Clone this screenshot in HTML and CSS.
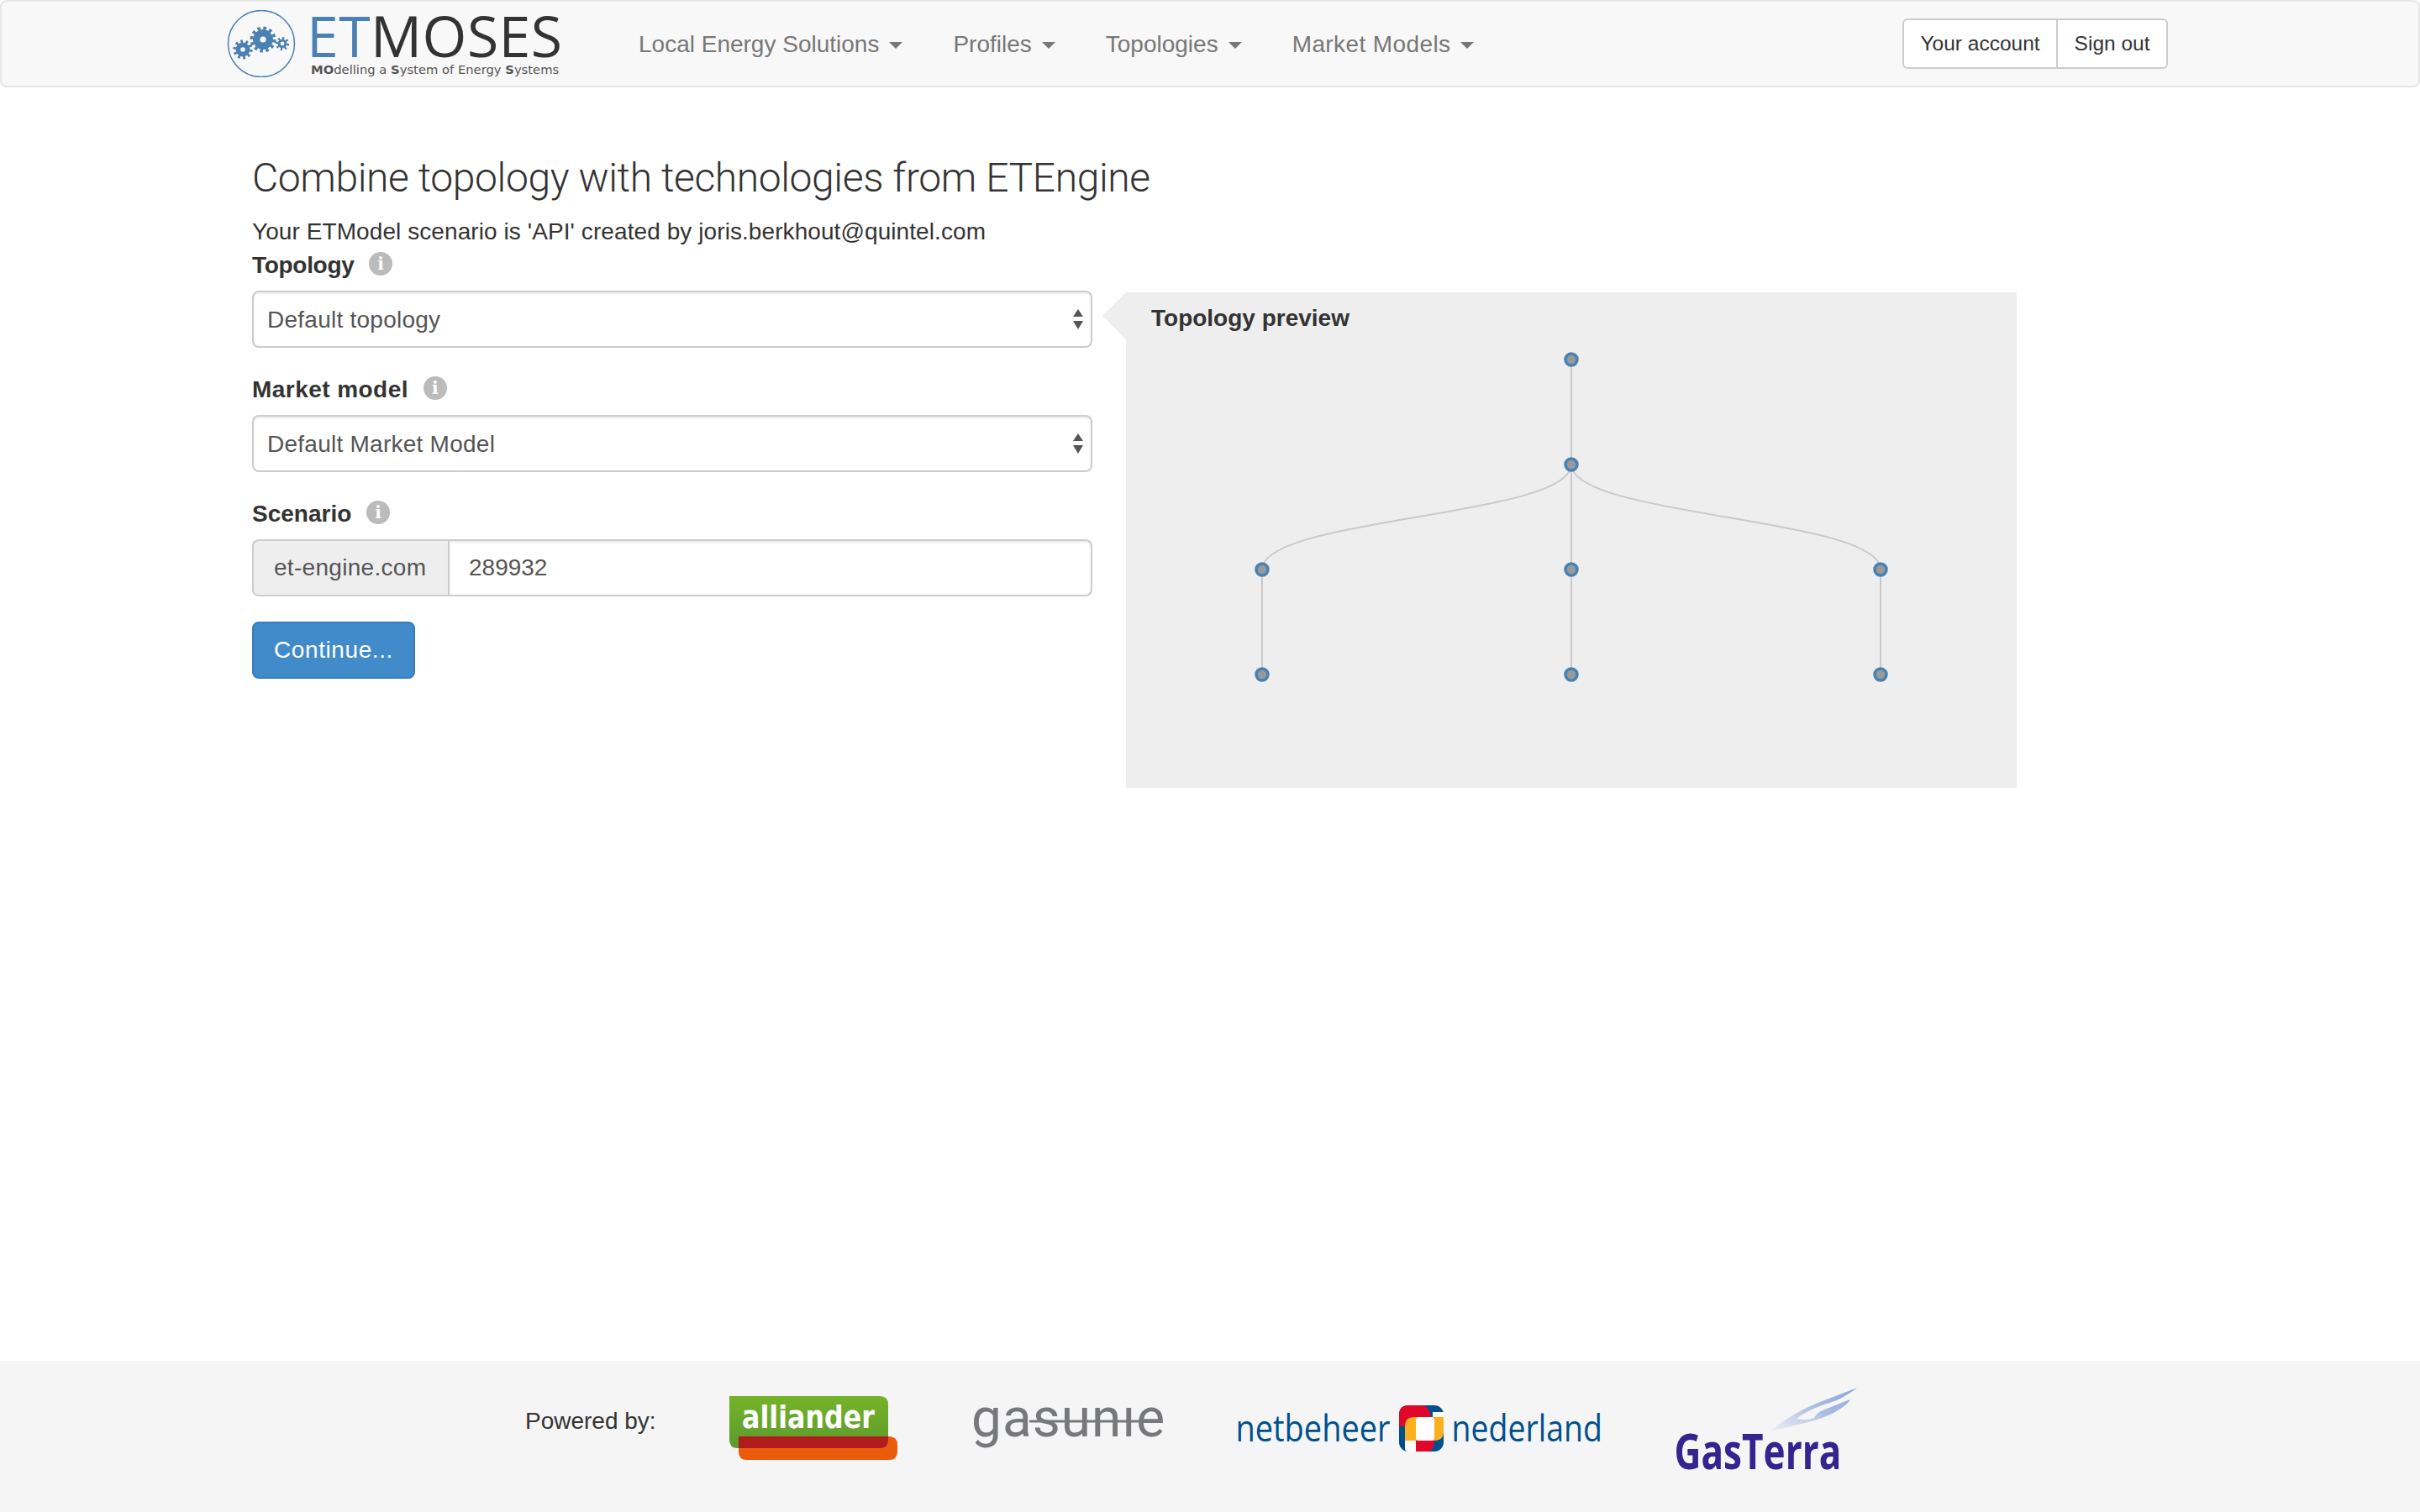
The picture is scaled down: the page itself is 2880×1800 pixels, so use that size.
FILE: index.html
```html
<!DOCTYPE html>
<html lang="en">
<head>
    <meta charset="UTF-8">
    <meta name="viewport" content="width=device-width, initial-scale=1.0">
    <title>ETMoses</title>
    <link rel="stylesheet" href="styles.css">
</head>
<body>
    <nav class="navbar">
        <div class="navbar-inner">
            <a class="brand" href="#">
                <svg class="brand-mark" width="82" height="80" viewBox="0 0 82 80">
                    <circle cx="41" cy="40" r="39.5" fill="none" stroke="#4a80b3" stroke-width="1.5"/>
                    <g fill="#4a80b3" stroke="#4a80b3">
                        <circle cx="43" cy="35" r="11.5"/>
                        <circle cx="43" cy="35" r="13.5" fill="none" stroke-width="4" stroke-dasharray="3.5 3.57"/>
                        <circle cx="19" cy="47" r="8"/>
                        <circle cx="19" cy="47" r="9.8" fill="none" stroke-width="3.6" stroke-dasharray="2.8 3.36"/>
                        <circle cx="66" cy="40" r="5"/>
                        <circle cx="66" cy="40" r="6.6" fill="none" stroke-width="3" stroke-dasharray="2.2 2.95"/>
                    </g>
                    <circle cx="43" cy="35" r="3.6" fill="#f8f8f8"/>
                    <circle cx="19" cy="47" r="2.8" fill="#f8f8f8"/>
                    <circle cx="66" cy="40" r="2.4" fill="#f8f8f8"/>
                </svg>
                <span class="brand-text">
                    <span class="brand-name"><span class="brand-et">ET</span>MOSES</span>
                    <span class="brand-sub"><b>MO</b>delling a <b>S</b>ystem of Energy <b>S</b>ystems</span>
                </span>
            </a>
            <ul class="nav">
                <li><a href="#">Local Energy Solutions<span class="caret"></span></a></li>
                <li><a href="#">Profiles<span class="caret"></span></a></li>
                <li><a href="#">Topologies<span class="caret"></span></a></li>
                <li><a class="nav-wide" href="#">Market Models<span class="caret"></span></a></li>
            </ul>
            <div class="btn-group">
                <a class="btn-sm" href="#">Your account</a>
                <a class="btn-sm" href="#">Sign out</a>
            </div>
        </div>
    </nav>

    <main class="container">
        <h3 class="page-title">Combine topology with technologies from ETEngine</h3>
        <p class="intro">Your ETModel scenario is 'API' created by joris.berkhout@quintel.com</p>
        <div class="row">
            <form class="combine-form">
                <div class="form-group">
                    <label class="label-topology" for="topology">Topology <span class="info">i</span></label>
                    <div class="select-wrap">
                        <select id="topology" class="form-control">
                            <option>Default topology</option>
                        </select>
                        <span class="select-arrows"></span>
                    </div>
                </div>
                <div class="form-group">
                    <label class="label-market" for="market">Market model <span class="info">i</span></label>
                    <div class="select-wrap">
                        <select id="market" class="form-control">
                            <option>Default Market Model</option>
                        </select>
                        <span class="select-arrows"></span>
                    </div>
                </div>
                <div class="form-group">
                    <label for="scenario">Scenario <span class="info">i</span></label>
                    <div class="input-group">
                        <span class="input-addon">et-engine.com</span>
                        <input id="scenario" class="form-control" type="text" value="289932">
                    </div>
                </div>
                <button class="btn-primary" type="button">Continue...</button>
            </form>

            <section class="preview">
                <h5 class="preview-title">Topology preview</h5>
                <svg class="tree" width="1060" height="590" viewBox="0 0 1060 590">
                    <g fill="none" stroke="#c9c9c9" stroke-width="2">
                        <path d="M530 80V205"/>
                        <path d="M530 205C530 267.5 162 267.5 162 330"/>
                        <path d="M530 205V330"/>
                        <path d="M530 205C530 267.5 898 267.5 898 330"/>
                        <path d="M162 330V455"/>
                        <path d="M530 330V455"/>
                        <path d="M898 330V455"/>
                    </g>
                    <g fill="#999" stroke="#4682b4" stroke-width="3.5">
                        <circle cx="530" cy="80" r="7"/>
                        <circle cx="530" cy="205" r="7"/>
                        <circle cx="162" cy="330" r="7"/>
                        <circle cx="530" cy="330" r="7"/>
                        <circle cx="898" cy="330" r="7"/>
                        <circle cx="162" cy="455" r="7"/>
                        <circle cx="530" cy="455" r="7"/>
                        <circle cx="898" cy="455" r="7"/>
                    </g>
                </svg>
            </section>
        </div>
    </main>

    <footer class="footer">
        <span class="powered">Powered by:</span>

        <svg class="logo logo-alliander" width="200" height="76" viewBox="0 0 200 76">
            <defs>
                <linearGradient id="allianderGreen" x1="0" y1="0" x2="0" y2="1">
                    <stop offset="0" stop-color="#76b32a"/>
                    <stop offset="1" stop-color="#5b9a2c"/>
                </linearGradient>
            </defs>
            <path d="M0 0H179Q189 0 189 10V52Q189 62 179 62H10Q0 62 0 52Z" fill="url(#allianderGreen)"/>
            <path d="M11 48H190Q200 48 200 58V66Q200 76 190 76H21Q11 76 11 66Z" fill="#ea5b0c"/>
            <path d="M11 48H189V52Q189 62 179 62H11Z" fill="#b01c1c"/>
            <text class="alliander-text" transform="translate(15 38) scale(.835 1)">alliander</text>
        </svg>

        <svg class="logo logo-gasunie" width="232" height="80" viewBox="0 0 232 80">
            <text class="gasunie-text" x="0" y="60">gasunıe</text>
            <path d="M69 42H209" stroke="#77787b" stroke-width="3"/>
        </svg>

        <svg class="logo logo-netbeheer" width="436" height="60" viewBox="0 0 436 60">
            <text class="net-text" transform="translate(.5 47) scale(.883 1)">netbeheer</text>
            <g transform="translate(195 4)">
                <rect width="53" height="55" rx="11" fill="#00508f"/>
                <rect x="40" y="8" width="13" height="7" fill="#fff"/>
                <path d="M0 25V11Q0 0 11 0H26Q36 0 38 14V17H14Q7 17 7 25Z" fill="#e0072b"/>
                <path d="M7 25Q7 14 18 14H53V31Q53 42 42 42H7Z" fill="#fbb020"/>
                <rect x="20" y="14" width="22" height="28" rx="4" fill="#fff"/>
                <path d="M7 42H20V55H11Q7 55 7 51Z" fill="#fff"/>
                <path d="M20 42H42Q42 52 36 55H20Z" fill="#e0072b"/>
            </g>
            <text class="net-text" transform="translate(257.5 47) scale(.871 1)">nederland</text>
        </svg>

        <svg class="logo logo-gasterra" width="220" height="116" viewBox="0 0 220 116">
            <defs>
                <linearGradient id="swoosh" x1="0" y1="1" x2="1" y2="0">
                    <stop offset="0" stop-color="#eef2f9"/>
                    <stop offset="0.55" stop-color="#a9bcdf"/>
                    <stop offset="1" stop-color="#8ba6d6"/>
                </linearGradient>
            </defs>
            <path transform="translate(4 0)" d="M110 52C130 36 150 25 170 17C185 11 200 6 214 0C208 5 200 10 190 15C175 20 155 26 142 37C150 39 158 38 163 36C166 30 170 28 178 25C188 21 197 17 206 14C204 18 200 21 197 23C188 30 180 33 170 37C150 43 130 47 110 52Z" fill="url(#swoosh)"/>
            <text class="gasterra-text" transform="translate(.5 97) scale(.748 1)">GasTerra</text>
        </svg>
    </footer>
</body>
</html>
```

FILE: styles.css
```css
* {
    box-sizing: border-box;
}

body {
    margin: 0;
    min-height: 100vh;
    display: flex;
    flex-direction: column;
    font-family: "Liberation Sans", Arial, sans-serif;
    font-size: 28px;
    line-height: 40px;
    color: #333;
    background-color: #fff;
}

a {
    text-decoration: none;
}

/* navbar */
.navbar {
    height: 104px;
    margin-bottom: 40px;
    background-color: #f8f8f8;
    border: 2px solid #e7e7e7;
    border-radius: 8px;
}

.navbar-inner {
    width: 2340px;
    height: 100%;
    margin: 0 auto;
    display: flex;
    align-items: center;
}

.brand {
    display: flex;
    align-items: flex-start;
    width: 460px;
    height: 100%;
    padding-top: 10px;
}

.brand-text {
    display: flex;
    flex-direction: column;
    margin-left: 18px;
}

.brand-name {
    margin-left: -5px;
    font-family: "Open Sans", sans-serif;
    font-size: 68px;
    line-height: 60px;
    letter-spacing: 0.4px;
    color: #333;
}

.brand-et {
    color: #4a80b3;
}

.brand-sub {
    margin-top: 2px;
    font-family: "DejaVu Sans", sans-serif;
    font-size: 14.75px;
    line-height: 18px;
    color: #555;
}

.nav {
    display: flex;
    list-style: none;
    margin: 0;
    padding: 0;
    flex: 1;
}

.nav a {
    display: block;
    padding: 1px 30px 0;
    color: #777;
}

.nav .nav-wide {
    letter-spacing: 0.4px;
}

.caret {
    display: inline-block;
    margin-left: 12px;
    vertical-align: middle;
    border-top: 8px solid #777;
    border-left: 8px solid transparent;
    border-right: 8px solid transparent;
}

.btn-group {
    display: flex;
    margin-right: 30px;
}

.btn-sm {
    height: 60px;
    padding: 0 19.5px;
    font-size: 24.5px;
    line-height: 56px;
    color: #333;
    background-color: #fff;
    border: 2px solid #ccc;
}

.btn-sm:first-child {
    border-radius: 6px 0 0 6px;
}

.btn-sm:last-child {
    margin-left: -2px;
    border-radius: 0 6px 6px 0;
}

/* page */
.container {
    width: 2340px;
    margin: 0 auto;
    padding: 0 30px;
    flex: 1;
}

.page-title {
    margin: 41px 0 17px;
    font-family: Roboto, "Liberation Sans", sans-serif;
    font-size: 48px;
    font-weight: 300;
    line-height: 54px;
    letter-spacing: -0.4px;
}

.intro {
    margin: 0;
    letter-spacing: 0.08px;
}

.row {
    display: flex;
    gap: 40px;
}

.combine-form {
    width: 1000px;
}

.form-group {
    margin-bottom: 30px;
}

label {
    display: block;
    margin-bottom: 10px;
    font-weight: bold;
}

.label-topology {
    letter-spacing: -0.3px;
}

.label-market {
    letter-spacing: 0.45px;
}

.info {
    display: inline-block;
    width: 28px;
    height: 28px;
    margin-left: 10px;
    border-radius: 50%;
    background-color: #bbb;
    color: #fff;
    font-family: "DejaVu Serif", serif;
    font-size: 20px;
    font-weight: bold;
    line-height: 28px;
    text-align: center;
    vertical-align: 4px;
}

.form-control {
    display: block;
    width: 100%;
    height: 68px;
    padding: 0 23px;
    font-family: inherit;
    font-size: 28px;
    color: #555;
    background-color: #fff;
    border: 2px solid #ccc;
    border-radius: 8px;
    box-shadow: inset 0 2px 2px rgba(0, 0, 0, 0.075);
    outline: none;
}

select.form-control {
    appearance: none;
    padding: 0 40px 0 16px;
    letter-spacing: 0.25px;
}

.select-wrap {
    position: relative;
}

.select-arrows {
    position: absolute;
    right: 10px;
    top: 22px;
    width: 13px;
    height: 24px;
}

.select-arrows::before,
.select-arrows::after {
    content: "";
    position: absolute;
    left: 0;
    border-left: 6.5px solid transparent;
    border-right: 6.5px solid transparent;
}

.select-arrows::before {
    top: 0;
    border-bottom: 9px solid #555;
}

.select-arrows::after {
    bottom: 0;
    border-top: 10px solid #555;
}

.input-group {
    display: flex;
}

.input-addon {
    width: 233px;
    flex-shrink: 0;
    padding: 0 24px;
    line-height: 64px;
    letter-spacing: 0.3px;
    color: #555;
    background-color: #eee;
    border: 2px solid #ccc;
    border-right: none;
    border-radius: 8px 0 0 8px;
}

.input-group .form-control {
    flex: 1;
    border-radius: 0 8px 8px 0;
}

.btn-primary {
    height: 68px;
    width: 194px;
    padding: 0;
    font-family: inherit;
    font-size: 28px;
    letter-spacing: 0.6px;
    color: #fff;
    background-color: #428bca;
    border: 2px solid #357ebd;
    border-radius: 8px;
}

/* topology preview */
.preview {
    position: relative;
    width: 1060px;
    height: 590px;
    margin-top: 52px;
    background-color: #eee;
}

.preview::before {
    content: "";
    position: absolute;
    left: -28px;
    top: 0;
    border-right: 28px solid #eee;
    border-top: 28.5px solid transparent;
    border-bottom: 28.5px solid transparent;
}

.preview-title {
    position: absolute;
    left: 30px;
    top: 11px;
    margin: 0;
    font-size: 28px;
    font-weight: bold;
}

.tree {
    display: block;
}

/* footer */
.footer {
    height: 180px;
    padding-left: 625px;
    display: flex;
    align-items: flex-start;
    background-color: #f5f5f5;
}

.powered {
    width: 155px;
    margin-top: 52px;
    margin-right: 88px;
    white-space: nowrap;
}

.logo {
    flex-shrink: 0;
    display: block;
}

.logo-alliander {
    margin-top: 42px;
    margin-right: 88px;
}

.logo-gasunie {
    margin-top: 30px;
    margin-right: 82px;
}

.logo-netbeheer {
    margin-top: 49px;
    margin-right: 86px;
}

.logo-gasterra {
    margin-top: 32px;
}

.net-text {
    font-family: "Open Sans", sans-serif;
    font-size: 43px;
    fill: #00508f;
}

.alliander-text {
    font-family: "DejaVu Sans", sans-serif;
    font-size: 38px;
    font-weight: bold;
    fill: #fff;
}

.gasunie-text {
    font-family: Roboto, sans-serif;
    font-size: 64px;
    letter-spacing: 1px;
    fill: #77787b;
}

.gasterra-text {
    font-family: "Open Sans", sans-serif;
    font-size: 59px;
    font-weight: bold;
    fill: #35238f;
}
```
